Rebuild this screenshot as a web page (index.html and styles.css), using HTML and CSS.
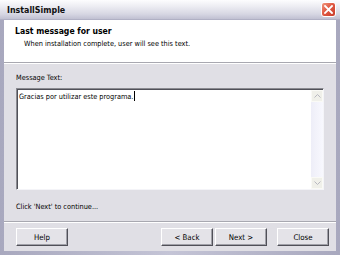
FILE: index.html
```html
<!DOCTYPE html>
<html>
<head>
<meta charset="utf-8">
<link rel="stylesheet" href="styles.css">
</head>
<body>
<div class="window">
  <div class="titlebar">
    <span class="title">InstallSimple</span>
    <span class="close">
      <svg width="9" height="9" viewBox="0 0 9 9"><path d="M1 1L8 8M8 1L1 8" stroke="#fff" stroke-width="1.8" stroke-linecap="square"/></svg>
    </span>
  </div>
  <div class="frame">
    <div class="client">
      <div class="header">
        <div class="h-title">Last message for user</div>
        <div class="h-sub">When installation complete, user will see this text.</div>
      </div>
      <div class="content">
        <div class="label">Message Text:</div>
        <div class="textbox">
          <div class="text">Gracias por utilizar este programa.<span class="caret"></span></div>
          <div class="scrollbar">
            <div class="sb-btn"><svg width="7" height="4" viewBox="0 0 7 4"><path d="M0.5 3.5L3.5 0.5L6.5 3.5" fill="none" stroke="#b8b8c0" stroke-width="1"/></svg></div>
            <div class="sb-track"></div>
            <div class="sb-btn"><svg width="7" height="4" viewBox="0 0 7 4"><path d="M0.5 0.5L3.5 3.5L6.5 0.5" fill="none" stroke="#b8b8c0" stroke-width="1"/></svg></div>
          </div>
        </div>
        <div class="status">Click 'Next' to continue...</div>
      </div>
      <div class="footer">
        <button class="btn">Help</button>
        <div class="spacer"></div>
        <button class="btn">&lt; Back</button>
        <button class="btn btn-next">Next &gt;</button>
        <button class="btn btn-close">Close</button>
      </div>
    </div>
  </div>
</div>
</body>
</html>
```

FILE: styles.css
```css
* { box-sizing: border-box; }
html, body { margin: 0; padding: 0; }
body {
  font-family: "DejaVu Sans Condensed", "Liberation Sans", Arial, sans-serif;
  font-stretch: condensed;
  font-size: 7.3px;
  color: #000;
  background: #fff;
}
.window {
  width: 340px;
  height: 255px;
  display: flex;
  flex-direction: column;
  background: #b4b4c8;
}
.titlebar {
  height: 20px;
  flex: none;
  display: flex;
  align-items: center;
  justify-content: space-between;
  padding: 0 4px 0 7px;
  background: linear-gradient(#fdfdfe 0%, #ececf2 35%, #d6d6e2 75%, #c0c0d2 100%);
  border-bottom: 1px solid #b0b0c4;
}
.title {
  font-weight: bold;
  font-size: 8.8px;
  color: #101010;
}
.close {
  width: 15px;
  height: 15px;
  border: 1px solid #fff;
  border-radius: 3px;
  background: linear-gradient(135deg, #f09880 0%, #e05a44 45%, #c83c2c 100%);
  display: flex;
  align-items: center;
  justify-content: center;
}
.frame {
  flex: 1;
  display: flex;
  padding: 0 4px 4px 4px;
  background: linear-gradient(90deg, #a8a8be, #c4c4d6 50%, #a8a8be);
}
.client {
  flex: 1;
  display: flex;
  flex-direction: column;
  background: #e0dfe5;
}
.header {
  height: 43px;
  background: #fff;
  padding: 5px 0 0 11px;
  border-bottom: 1px solid #a8a8b0;
  box-shadow: 0 1px 0 #fff;
}
.h-title {
  font-weight: bold;
  font-size: 8.6px;
  line-height: 13px;
  color: #000;
}
.h-sub {
  padding-left: 9px;
  line-height: 12px;
}
.content {
  padding: 9px 12px 0 12px;
}
.label {
  line-height: 11px;
  margin-bottom: 5px;
}
.textbox {
  height: 102px;
  display: flex;
  background: #fff;
  border-top: 1px solid #8a8a90;
  border-left: 1px solid #8a8a90;
  border-right: 1px solid #f4f4f8;
  border-bottom: 1px solid #f4f4f8;
  box-shadow: inset 1px 1px 0 #505058;
}
.text {
  flex: 1;
  padding: 2px 0 0 2px;
  line-height: 11px;
}
.caret {
  display: inline-block;
  width: 1px;
  height: 10px;
  background: #000;
  vertical-align: -2px;
  margin-left: 1px;
}
.scrollbar {
  width: 12px;
  display: flex;
  flex-direction: column;
  background: #f2f2f8;
  margin: 1px 0 0 0;
}
.sb-btn {
  height: 12px;
  display: flex;
  align-items: center;
  justify-content: center;
  background: #f0f0ea;
  border: 1px solid #fafaf6;
}
.sb-track {
  flex: 1;
  background: linear-gradient(90deg, #eeeef8, #f8f8fe);
}
.status {
  margin-top: 11px;
  line-height: 11px;
}
.footer {
  margin-top: 9px;
  border-top: 1px solid #a8a8b0;
  box-shadow: inset 0 1px 0 #fff;
  display: flex;
  padding: 6px 7px 0 12px;
}
.spacer { flex: 1; }
.btn {
  width: 52px;
  height: 18px;
  margin: 0;
  padding: 0;
  font-family: inherit;
  font-stretch: condensed;
  font-size: 7.8px;
  color: #000;
  background: #e4e3e8;
  border-top: 1px solid #fff;
  border-left: 1px solid #fff;
  border-right: 1px solid #505058;
  border-bottom: 1px solid #505058;
  box-shadow: inset -1px -1px 0 #a0a0a8;
}
.btn-next { margin-left: 2px; }
.btn-close { margin-left: 10px; }
```
